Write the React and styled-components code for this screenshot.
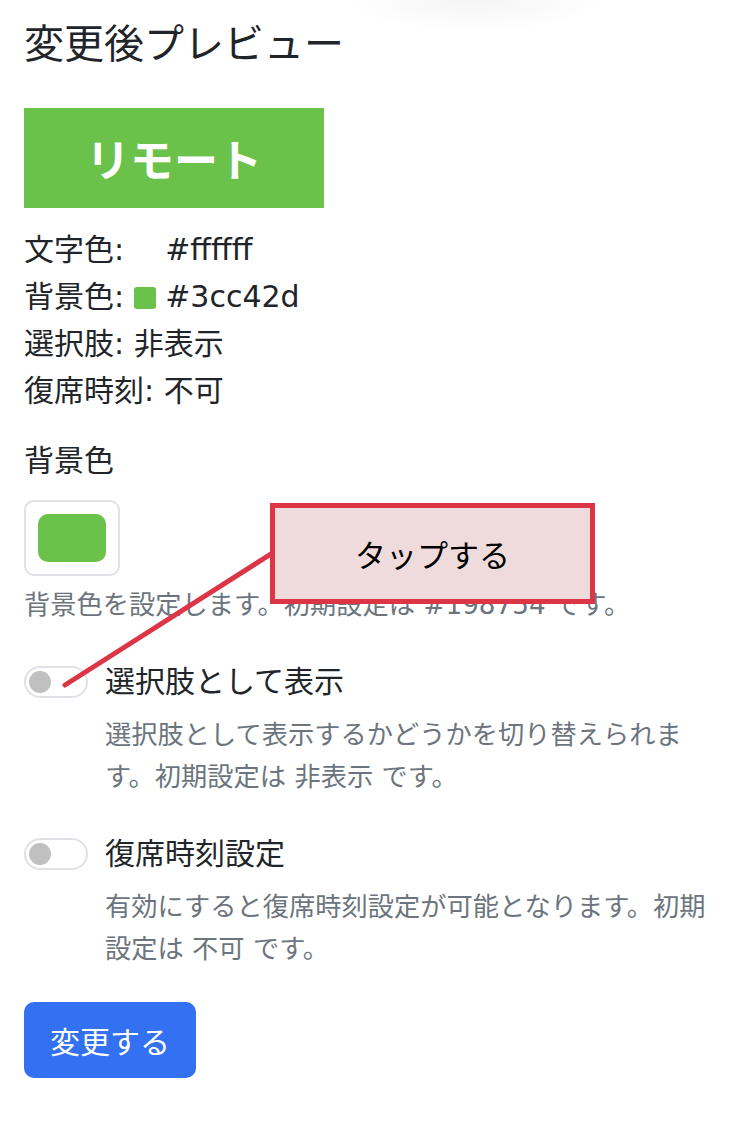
import React, { useState } from "react";
import styled, { createGlobalStyle } from "styled-components";

const GlobalStyle = createGlobalStyle`
  html, body {
    margin: 0;
    padding: 0;
    background: #fff;
  }
  body {
    font-family: "DejaVu Sans", "Noto Sans CJK JP", sans-serif;
    color: #212529;
    background:
      radial-gradient(ellipse 130px 32px at 475px 0, rgba(0, 0, 0, 0.045), rgba(0, 0, 0, 0) 100%)
      no-repeat #fff;
  }
`;

function App() {
  const [showChoice, setShowChoice] = useState(false);
  const [returnTime, setReturnTime] = useState(false);

  return (
    <>
      <GlobalStyle />
      <Page>
        <Title>変更後プレビュー</Title>

        {/* プレビュー */}
        <Preview bg="#6ac24a" fg="#ffffff">リモート</Preview>

        <InfoList>
          <InfoRow>
            文字色: <Swatch color="#ffffff" /> #ffffff
          </InfoRow>
          <InfoRow>
            背景色: <Swatch color="#6ac24a" /> #3cc42d
          </InfoRow>
          <InfoRow>選択肢: {showChoice ? "表示" : "非表示"}</InfoRow>
          <InfoRow>復席時刻: {returnTime ? "可" : "不可"}</InfoRow>
        </InfoList>

        {/* 背景色 */}
        <FieldLabel>背景色</FieldLabel>
        <ColorButton type="button">
          <ColorChip color="#6ac24a" />
        </ColorButton>
        <HelpText>背景色を設定します。初期設定は #198754 です。</HelpText>

        {/* スイッチ */}
        <SwitchBlock>
          <SwitchRow onClick={() => setShowChoice(!showChoice)}>
            <Track on={showChoice}>
              <Knob on={showChoice} />
            </Track>
            <SwitchLabel>選択肢として表示</SwitchLabel>
          </SwitchRow>
          <SwitchDesc>
            選択肢として表示するかどうかを切り替えられます。初期設定は 非表示 です。
          </SwitchDesc>
        </SwitchBlock>

        <SwitchBlock>
          <SwitchRow onClick={() => setReturnTime(!returnTime)}>
            <Track on={returnTime}>
              <Knob on={returnTime} />
            </Track>
            <SwitchLabel>復席時刻設定</SwitchLabel>
          </SwitchRow>
          <SwitchDesc>
            有効にすると復席時刻設定が可能となります。初期設定は 不可 です。
          </SwitchDesc>
        </SwitchBlock>

        <SubmitButton type="button">変更する</SubmitButton>

        {/* 注釈 */}
        <Pointer viewBox="0 0 750 1142" width="750" height="1142">
          <line
            x1="65"
            y1="685"
            x2="274"
            y2="552"
            stroke="#dc3545"
            strokeWidth="5"
            strokeLinecap="round"
          />
        </Pointer>
        <Callout>タップする</Callout>
      </Page>
    </>
  );
}

export default App;

/* ---------- styled ---------- */

const Page = styled.div`
  position: relative;
  width: 750px;
  min-height: 1142px;
  box-sizing: border-box;
  padding: 20px 24px 40px;
`;

const Title = styled.h2`
  margin: 0 0 40px;
  font-size: 40px;
  font-weight: 400;
  line-height: 48px;
  color: #212529;
`;

const Preview = styled.div`
  width: 300px;
  height: 100px;
  display: flex;
  align-items: center;
  justify-content: center;
  background: ${({ bg }) => bg};
  color: ${({ fg }) => fg};
  font-size: 44px;
  font-weight: 700;
  margin-bottom: 18px;
`;

const InfoList = styled.div`
  margin-bottom: 23px;
`;

const InfoRow = styled.div`
  font-size: 30px;
  line-height: 47px;
  white-space: pre;
`;

const Swatch = styled.span`
  display: inline-block;
  width: 22px;
  height: 22px;
  border-radius: 3px;
  background: ${({ color }) => color};
  vertical-align: -2px;
`;

const FieldLabel = styled.div`
  font-size: 30px;
  line-height: 47px;
  margin-bottom: 16px;
`;

const ColorButton = styled.button`
  display: block;
  width: 96px;
  height: 76px;
  box-sizing: border-box;
  padding: 12px;
  border: 2px solid #dee2e6;
  border-radius: 10px;
  background: #fff;
  cursor: pointer;
`;

const ColorChip = styled.span`
  display: block;
  width: 100%;
  height: 100%;
  border-radius: 10px;
  background: ${({ color }) => color};
`;

const HelpText = styled.div`
  margin-top: 8px;
  font-size: 26.25px;
  line-height: 42px;
  color: #6c757d;
`;

const SwitchBlock = styled.div`
  margin-top: 32px;
`;

const SwitchRow = styled.label`
  display: flex;
  align-items: center;
  gap: 17px;
  cursor: pointer;
`;

const Track = styled.span`
  flex: none;
  width: 64px;
  height: 32px;
  box-sizing: border-box;
  padding: 0 3px;
  border: 2px solid ${({ on }) => (on ? "#3371f2" : "#dee2e6")};
  border-radius: 16px;
  background: ${({ on }) => (on ? "#3371f2" : "#fff")};
  display: flex;
  align-items: center;
  justify-content: ${({ on }) => (on ? "flex-end" : "flex-start")};
`;

const Knob = styled.span`
  width: 22px;
  height: 22px;
  border-radius: 50%;
  background: ${({ on }) => (on ? "#fff" : "#c0c0c0")};
`;

const SwitchLabel = styled.span`
  font-size: 30px;
  line-height: 47px;
`;

const SwitchDesc = styled.div`
  margin: 9px 0 0 81px;
  font-size: 26.25px;
  line-height: 42px;
  color: #6c757d;
`;

const SubmitButton = styled.button`
  display: block;
  margin-top: 32px;
  width: 172px;
  height: 76px;
  padding: 0;
  border: none;
  border-radius: 10px;
  background: #3371f2;
  color: #fff;
  font-family: inherit;
  font-size: 30px;
  cursor: pointer;
`;

/* ---------- annotation ---------- */

const Pointer = styled.svg`
  position: absolute;
  left: 0;
  top: 0;
  pointer-events: none;
`;

const Callout = styled.div`
  position: absolute;
  left: 270px;
  top: 503px;
  width: 325px;
  height: 101px;
  box-sizing: border-box;
  border: 5px solid #dc3545;
  background: #f0dbdc;
  display: flex;
  align-items: center;
  justify-content: center;
  font-size: 31px;
  color: #000;
`;
